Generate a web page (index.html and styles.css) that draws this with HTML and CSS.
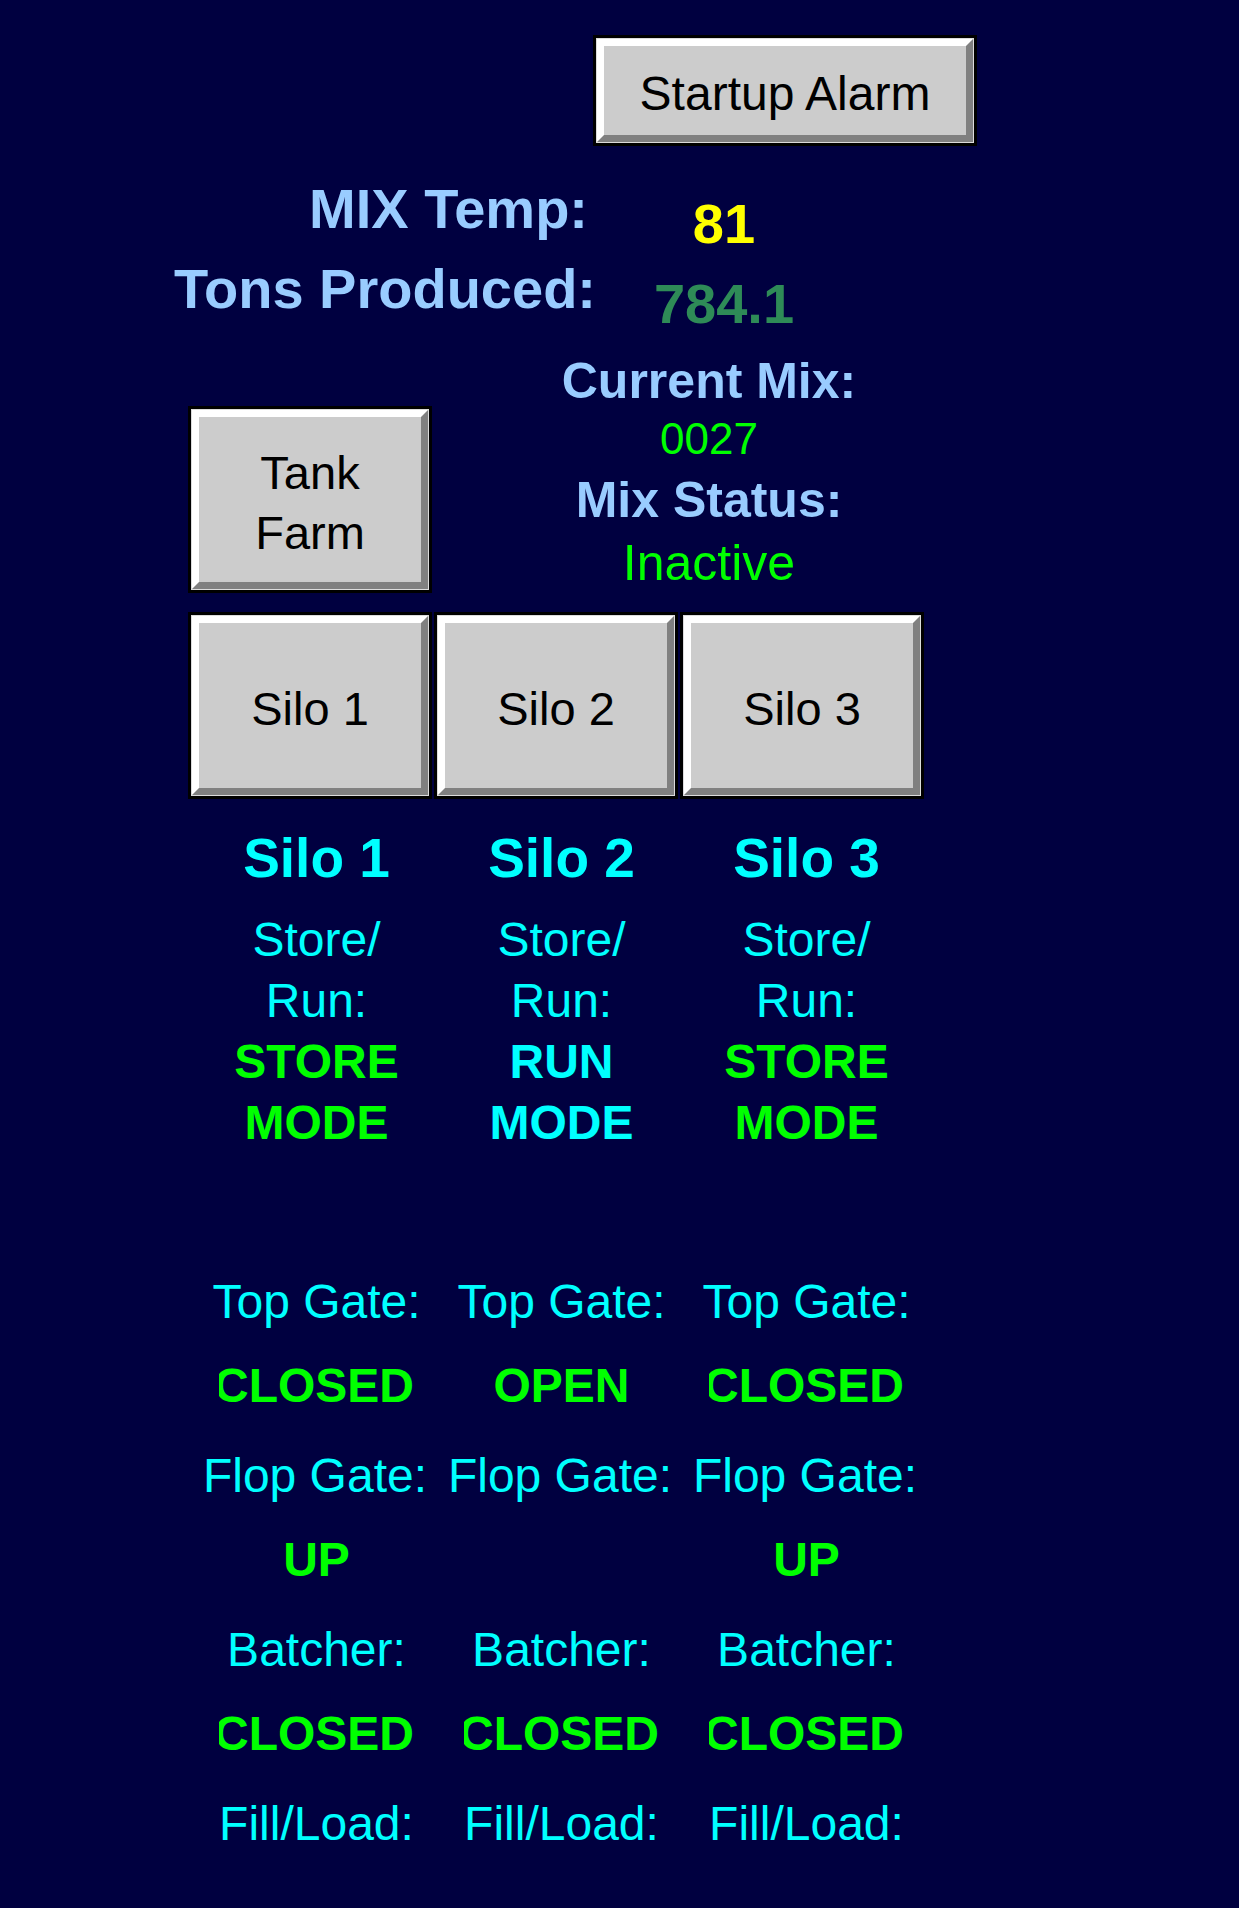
FILE: index.html
```html
<!DOCTYPE html>
<html lang="en">
<head>
  <meta charset="UTF-8">
  <meta name="viewport" content="width=device-width, initial-scale=1.0">
  <title>Plant Overview</title>
  <link rel="stylesheet" href="styles.css">
</head>
<body>
  <div class="screen">
    <button class="btn alarm-btn">Startup Alarm</button>

    <!-- Mix temperature and production -->
    <div class="stats">
      <div class="stat-label short">MIX Temp:</div>
      <div class="stat-value temp">81</div>
      <div class="stat-label">Tons Produced:</div>
      <div class="stat-value tons">784.1</div>
    </div>

    <div class="mix-row">
      <button class="btn tank-btn">Tank<br>Farm</button>
      <div class="mix-info">
        <div class="mix-title">Current Mix:</div>
        <div class="mix-code">0027</div>
        <div class="mix-title status">Mix Status:</div>
        <div class="mix-state">Inactive</div>
      </div>
    </div>

    <div class="silo-buttons">
      <button class="btn silo-btn">Silo 1</button>
      <button class="btn silo-btn">Silo 2</button>
      <button class="btn silo-btn">Silo 3</button>
    </div>

    <!-- Silo modes -->
    <div class="silo-grid">
      <div class="silo-col">
        <div class="silo-title">Silo 1</div>
        <div class="silo-text">Store/</div>
        <div class="silo-text">Run:</div>
        <div class="silo-mode">STORE</div>
        <div class="silo-mode">MODE</div>
      </div>
      <div class="silo-col">
        <div class="silo-title">Silo 2</div>
        <div class="silo-text">Store/</div>
        <div class="silo-text">Run:</div>
        <div class="silo-mode run">RUN</div>
        <div class="silo-mode run">MODE</div>
      </div>
      <div class="silo-col">
        <div class="silo-title">Silo 3</div>
        <div class="silo-text">Store/</div>
        <div class="silo-text">Run:</div>
        <div class="silo-mode">STORE</div>
        <div class="silo-mode">MODE</div>
      </div>
    </div>

    <!-- Gate states -->
    <div class="gate-grid">
      <div class="gate-col">
        <div class="gate-label"><span>Top Gate:</span></div>
        <div class="gate-value"><span>CLOSED</span></div>
        <div class="gate-label"><span>Flop Gate:</span></div>
        <div class="gate-value"><span>UP</span></div>
        <div class="gate-label"><span>Batcher:</span></div>
        <div class="gate-value"><span>CLOSED</span></div>
        <div class="gate-label"><span>Fill/Load:</span></div>
      </div>
      <div class="gate-col">
        <div class="gate-label"><span>Top Gate:</span></div>
        <div class="gate-value"><span>OPEN</span></div>
        <div class="gate-label"><span>Flop Gate:</span></div>
        <div class="gate-value"><span></span></div>
        <div class="gate-label"><span>Batcher:</span></div>
        <div class="gate-value"><span>CLOSED</span></div>
        <div class="gate-label"><span>Fill/Load:</span></div>
      </div>
      <div class="gate-col">
        <div class="gate-label"><span>Top Gate:</span></div>
        <div class="gate-value"><span>CLOSED</span></div>
        <div class="gate-label"><span>Flop Gate:</span></div>
        <div class="gate-value"><span>UP</span></div>
        <div class="gate-label"><span>Batcher:</span></div>
        <div class="gate-value"><span>CLOSED</span></div>
        <div class="gate-label"><span>Fill/Load:</span></div>
      </div>
    </div>
  </div>
</body>
</html>
```

FILE: styles.css
```css
body {
  margin: 0;
  padding: 0;
  background-color: #000040;
  font-family: "Liberation Sans", Arial, sans-serif;
  overflow: hidden;
}

.screen {
  width: 1239px;
  height: 1908px;
  box-sizing: border-box;
  padding-left: 192px;
}

/* Raised grey panel buttons */
.btn {
  display: block;
  box-sizing: border-box;
  margin: 0;
  padding: 6px 0 0 0;
  border: 7px solid;
  border-color: #ffffff #808080 #808080 #ffffff;
  background-color: #cccccc;
  box-shadow: 0 0 0 1px #dcdcdc, 0 0 0 4px #000000;
  font-family: inherit;
  font-size: 47px;
  line-height: 60px;
  color: #000000;
  text-align: center;
  cursor: pointer;
}

.alarm-btn {
  margin: 39px 0 0 405px;
  width: 376px;
  height: 103px;
  font-size: 48px;
}

.tank-btn {
  flex: none;
  margin-top: 59px;
  width: 236px;
  height: 179px;
}

.silo-btn {
  flex: none;
  width: 236px;
  height: 179px;
}

/* Stats */
.stats {
  display: grid;
  grid-template-columns: 464px 256px;
  margin: 27px 0 0 -60px;
  font-size: 56px;
  font-weight: bold;
  line-height: 80px;
  white-space: nowrap;
}

.stat-label {
  text-align: right;
  color: #99ccff;
}

.stat-label.short {
  padding-right: 8px;
}

.stat-value {
  padding-top: 15px;
  margin-bottom: -15px; /* sits lower than its label */
  text-align: center;
}

.temp {
  color: #ffff00;
}

.tons {
  color: #2e8b57;
}

/* Current mix */
.mix-row {
  display: flex;
  align-items: flex-start;
  margin-top: 22px;
}

.mix-info {
  flex: none;
  width: 562px;
  text-align: center;
}

.mix-title {
  font-size: 50px;
  font-weight: bold;
  line-height: 60px;
  color: #99ccff;
}

.mix-title.status {
  line-height: 66px;
}

.mix-code {
  font-size: 44px;
  line-height: 56px;
  color: #00ff00;
}

.mix-state {
  font-size: 50px;
  line-height: 60px;
  color: #00ff00;
}

.silo-buttons {
  display: flex;
  gap: 10px;
  margin-top: 23px;
}

/* Silo modes */
.silo-grid {
  display: grid;
  grid-template-columns: repeat(3, 245px);
  margin: 30px 0 0 2px;
  text-align: center;
}

.silo-title {
  margin-bottom: 18px;
  font-size: 55px;
  font-weight: bold;
  line-height: 66px;
  color: #00ffff;
}

.silo-text {
  font-size: 48px;
  line-height: 61px;
  color: #00ffff;
}

.silo-mode {
  font-size: 48px;
  font-weight: bold;
  line-height: 61px;
  color: #00ff00;
}

.silo-mode.run {
  color: #00ffff;
}

/* Gates */
.gate-grid {
  display: grid;
  grid-template-columns: repeat(3, 245px);
  margin: 119px 0 0 2px;
}

.gate-label,
.gate-value {
  display: flex;
  justify-content: flex-end; /* long text gets cut on the left */
  overflow: hidden;
  margin: 0 auto;
  height: 60px;
  font-size: 48px;
  line-height: 60px;
  white-space: nowrap;
}

.gate-label span,
.gate-value span {
  flex-shrink: 0;
  margin: 0 auto;
}

.gate-label {
  width: 221px;
  margin-top: 30px;
  color: #00ffff;
}

.gate-label:first-child {
  margin-top: 0;
}

.gate-value {
  width: 195px;
  margin-top: 24px;
  font-weight: bold;
  color: #00ff00;
}
```
